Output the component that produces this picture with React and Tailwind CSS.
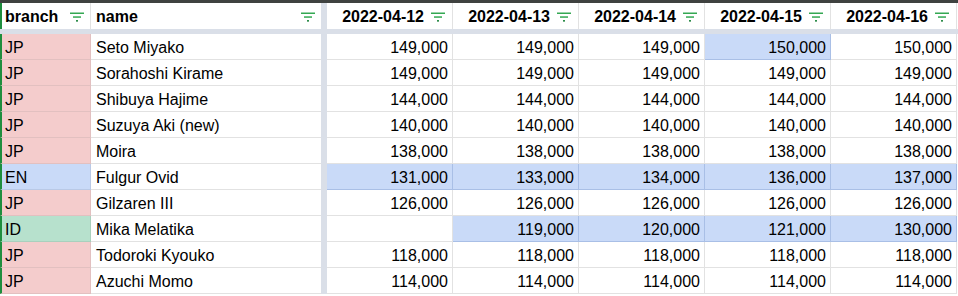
import React from "react";

const rows = [
  { b: "JP", n: "Seto Miyako", v: ["149,000", "149,000", "149,000", "150,000", "150,000"], hi: [3] },
  { b: "JP", n: "Sorahoshi Kirame", v: ["149,000", "149,000", "149,000", "149,000", "149,000"], hi: [] },
  { b: "JP", n: "Shibuya Hajime", v: ["144,000", "144,000", "144,000", "144,000", "144,000"], hi: [] },
  { b: "JP", n: "Suzuya Aki (new)", v: ["140,000", "140,000", "140,000", "140,000", "140,000"], hi: [] },
  { b: "JP", n: "Moira", v: ["138,000", "138,000", "138,000", "138,000", "138,000"], hi: [] },
  { b: "EN", n: "Fulgur Ovid", v: ["131,000", "133,000", "134,000", "136,000", "137,000"], hi: [0, 1, 2, 3, 4] },
  { b: "JP", n: "Gilzaren III", v: ["126,000", "126,000", "126,000", "126,000", "126,000"], hi: [] },
  { b: "ID", n: "Mika Melatika", v: ["", "119,000", "120,000", "121,000", "130,000"], hi: [1, 2, 3, 4] },
  { b: "JP", n: "Todoroki Kyouko", v: ["118,000", "118,000", "118,000", "118,000", "118,000"], hi: [] },
  { b: "JP", n: "Azuchi Momo", v: ["114,000", "114,000", "114,000", "114,000", "114,000"], hi: [] },
];

const dates = ["2022-04-12", "2022-04-13", "2022-04-14", "2022-04-15", "2022-04-16"];

const branchBg = {
  JP: "bg-[#f4cccc] border-[#e2c0c0]",
  EN: "bg-[#c9daf8] border-[#b9c9e6]",
  ID: "bg-[#b7e1cd] border-[#a9d0bd]",
};

function FilterIcon() {
  return (
    <span className="flex h-full w-[18px] items-center justify-center pt-[1px]">
      <svg width="14" height="10" viewBox="0 0 14 10">
        <rect x="0" y="0.5" width="14" height="1.5" fill="#34a853" />
        <rect x="3" y="4.3" width="8" height="1.5" fill="#34a853" />
        <rect x="6" y="8.1" width="2" height="1.5" fill="#188038" />
      </svg>
    </span>
  );
}

function Band() {
  return <div className="w-[6px] shrink-0 bg-[#dadfe8]" />;
}

export default function App() {
  return (
    <div
      className="h-[296px] w-[958px] overflow-hidden bg-white text-[16px] text-black"
      style={{ fontFamily: '"Liberation Sans", Arial, sans-serif' }}
    >
      <div className="h-[3px] bg-[#3f4240]" />

      {/* header */}
      <div className="flex h-[26px] font-bold">
        <div className="flex w-[91px] shrink-0 items-center border-l-2 border-r border-[#e2e2e2] border-l-[#1e8e3e] pl-[3px] pr-[4px]">
          <span className="flex-1 pt-[2px]">branch</span>
          <FilterIcon />
        </div>
        <div className="flex w-[230px] shrink-0 items-center pl-[5px] pr-[4px]">
          <span className="flex-1 pt-[2px]">name</span>
          <FilterIcon />
        </div>
        <Band />
        {dates.map((d) => (
          <div key={d} className="flex w-[126px] shrink-0 items-center justify-end gap-[5px] border-r border-[#e2e2e2] pr-[5px]">
            <span className="pt-[2px]">{d}</span>
            <FilterIcon />
          </div>
        ))}
      </div>

      <div className="h-[5px] bg-[#dadfe8]" />

      {/* rows */}
      {rows.map((r) => (
        <div key={r.n} className="flex h-[26px]">
          <div className={`flex w-[91px] shrink-0 items-center border-b border-r border-l-2 border-l-[#1e8e3e] pl-[3px] pt-[2px] ${branchBg[r.b]}`}>
            {r.b}
          </div>
          <div className="flex w-[230px] shrink-0 items-center border-b border-[#e2e2e2] pl-[5px] pt-[2px]">{r.n}</div>
          <Band />
          {r.v.map((val, i) => (
            <div
              key={i}
              className={`flex w-[126px] shrink-0 items-center justify-end border-b border-r pr-[4px] pt-[2px] ${
                r.hi.includes(i) ? "border-[#a9bfe6] bg-[#c9daf8]" : "border-[#e2e2e2]"
              }`}
            >
              {val}
            </div>
          ))}
        </div>
      ))}
    </div>
  );
}
